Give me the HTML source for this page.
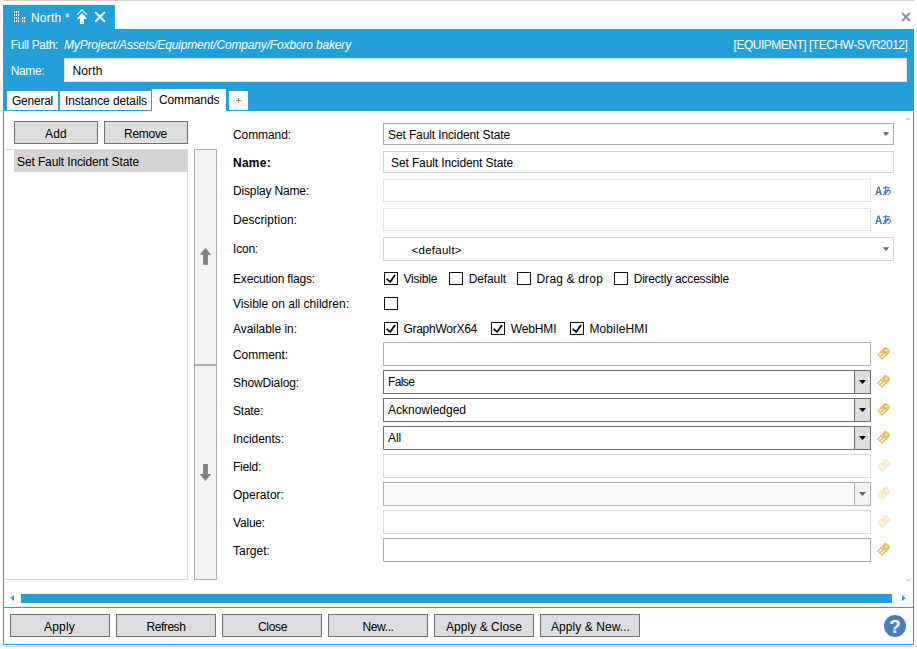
<!DOCTYPE html>
<html><head><meta charset="utf-8">
<style>
html,body{margin:0;padding:0;}
body{width:917px;height:649px;overflow:hidden;background:#fff;position:relative;font-family:"Liberation Sans",sans-serif;font-size:12px;color:#000;}
.a{position:absolute;box-sizing:border-box;}
.t{position:absolute;white-space:nowrap;line-height:14px;}
</style></head><body>
<div class="a" style="left:3px;top:0px;width:911px;height:1px;background:#d3d0d0"></div>
<div class="a" style="left:3px;top:5px;width:112px;height:25px;background:#259fd9"></div>
<div class="a" style="left:3px;top:29px;width:911px;height:82px;background:#259fd9"></div>
<div class="a" style="left:3px;top:110px;width:911px;height:535px;border:1px solid #259fd9;border-top:none"></div>
<div class="a" style="left:3px;top:645.6px;width:914px;height:1.4px;background:#d3d0cf"></div>
<svg class="a" style="left:13px;top:10px" width="14" height="14" viewBox="0 0 14 14">
<rect x="0.2" y="0.1" width="6.7" height="13.5" fill="#4f7dbd"/><g fill="#fff"><rect x="1" y="0.95" width="1.1" height="2.1"/><rect x="3" y="0.95" width="1.1" height="2.1"/><rect x="5" y="0.95" width="1.1" height="2.1"/><rect x="1" y="4" width="1.1" height="2.1"/><rect x="3" y="4" width="1.1" height="2.1"/><rect x="5" y="4" width="1.1" height="2.1"/><rect x="1" y="7.05" width="1.1" height="2.1"/><rect x="3" y="7.05" width="1.1" height="2.1"/><rect x="5" y="7.05" width="1.1" height="2.1"/><rect x="1" y="10.1" width="1.1" height="2.1"/><rect x="3" y="10.1" width="1.1" height="2.1"/><rect x="5" y="10.1" width="1.1" height="2.1"/></g>
<rect x="8.2" y="6.2" width="4.7" height="7.4" fill="#8a7f78"/><g fill="#fff"><rect x="9.1" y="7.05" width="1.1" height="2.1"/><rect x="11.1" y="7.05" width="1.1" height="2.1"/><rect x="9.1" y="10.1" width="1.1" height="2.1"/><rect x="11.1" y="10.1" width="1.1" height="2.1"/></g>
</svg>
<svg class="a" style="left:76px;top:9px" width="13" height="16" viewBox="0 0 13 16">
<path d="M1.1 5.7 L6 0.9 L10.9 5.7" fill="none" stroke="#fff" stroke-width="1.1"/>
<path d="M6 3.8 L11.1 10 L8 10 L8 15 L3.9 15 L3.9 10 L0.9 10 Z" fill="#fff"/></svg>
<svg class="a" style="left:94px;top:11px" width="12" height="12" viewBox="0 0 12 12"><path d="M1.7 1.6 L10.4 10.2 M10.4 1.6 L1.7 10.2" stroke="#fff" stroke-width="1.9" stroke-linecap="round" fill="none"/></svg>
<svg class="a" style="left:901px;top:12px" width="10" height="10" viewBox="0 0 10 10"><path d="M1 1 L9 9 M9 1 L1 9" stroke="#929292" stroke-width="2" fill="none"/></svg>
<div class="a" style="left:64px;top:58px;width:843px;height:24px;background:#fff;border:1px solid #e3e3e3"></div>
<div class="a" style="left:7px;top:91px;width:51px;height:19px;background:#fff"></div>
<div class="a" style="left:60px;top:91px;width:91px;height:19px;background:#fff"></div>
<div class="a" style="left:152px;top:89px;width:74px;height:22px;background:#fff"></div>
<div class="a" style="left:229px;top:91px;width:19px;height:19px;background:#fff"></div>
<div class="a" style="left:236px;top:100px;width:5px;height:1px;background:#6b9c84"></div>
<div class="a" style="left:238px;top:98px;width:1px;height:5px;background:#6b9c84"></div>
<div class="a" style="left:14px;top:121px;width:84px;height:23px;border:1px solid #707070;background:#dddddd"></div>
<div class="a" style="left:104px;top:121px;width:84px;height:23px;border:1px solid #707070;background:#dddddd"></div>
<div class="a" style="left:4px;top:149px;width:184px;height:431px;border:1px solid #dcdadb;border-left:none"></div>
<div class="a" style="left:14px;top:150px;width:173px;height:22px;background:#d5d3d4"></div>
<div class="a" style="left:194px;top:149px;width:23px;height:216px;background:#f4f4f4;border:1px solid #a9aeb1"></div>
<div class="a" style="left:194px;top:365px;width:23px;height:215px;background:#f4f4f4;border:1px solid #a9aeb1"></div>
<svg class="a" style="left:199px;top:247px" width="13" height="19" viewBox="0 0 13 19"><path d="M6.4 0.8 L12.2 7.7 L8.9 7.7 L8.9 17.8 L4.1 17.8 L4.1 7.7 L0.7 7.7 Z" fill="#808080"/></svg>
<svg class="a" style="left:199px;top:463px" width="13" height="19" viewBox="0 0 13 19"><path d="M6.4 17.9 L12.2 11 L8.9 11 L8.9 1.1 L4.1 1.1 L4.1 11 L0.7 11 Z" fill="#808080"/></svg>
<div class="a" style="left:383px;top:123px;width:511px;height:22px;background:#fff;border:1px solid #acacac"></div>
<svg class="a" style="left:882px;top:132px" width="9" height="5" viewBox="0 0 9 5"><path d="M0.80 0.20 L7.20 0.20 L4.00 3.90 Z" fill="#666"/></svg>
<div class="a" style="left:383px;top:151px;width:511px;height:22px;background:#fff;border:1px solid #d6d6d6"></div>
<div class="a" style="left:383px;top:179px;width:488px;height:23px;background:#fff;border:1px solid #e3e4ea"></div>
<div class="a" style="left:383px;top:208px;width:488px;height:23px;background:#fff;border:1px solid #e3e4ea"></div>
<svg class="a" style="left:875px;top:186px" width="17" height="10" viewBox="0 0 17 10"><path fill-rule="evenodd" fill="#4a7ebb" d="M0.1 8.9 L2.8 0.4 L4.4 0.4 L7.1 8.9 L5.4 8.9 L4.85 6.9 L2.35 6.9 L1.8 8.9 Z M2.7 5.6 L4.5 5.6 L3.6 2.2 Z"/><g fill="none" stroke="#4a7ebb" stroke-width="1.15" stroke-linecap="round"><path d="M8.4 1.9 L14.4 1.5"/><path d="M10.9 0.3 C10.6 3 10.3 6 10.7 8.5"/><path d="M13.4 3 C12.6 5.5 10.6 8 8.3 8.6"/><path d="M9.1 6.4 C10 4.6 13 3.8 14.8 4.8 C16.3 5.8 15.6 8 12.9 8.8"/></g></svg>
<svg class="a" style="left:875px;top:215px" width="17" height="10" viewBox="0 0 17 10"><path fill-rule="evenodd" fill="#4a7ebb" d="M0.1 8.9 L2.8 0.4 L4.4 0.4 L7.1 8.9 L5.4 8.9 L4.85 6.9 L2.35 6.9 L1.8 8.9 Z M2.7 5.6 L4.5 5.6 L3.6 2.2 Z"/><g fill="none" stroke="#4a7ebb" stroke-width="1.15" stroke-linecap="round"><path d="M8.4 1.9 L14.4 1.5"/><path d="M10.9 0.3 C10.6 3 10.3 6 10.7 8.5"/><path d="M13.4 3 C12.6 5.5 10.6 8 8.3 8.6"/><path d="M9.1 6.4 C10 4.6 13 3.8 14.8 4.8 C16.3 5.8 15.6 8 12.9 8.8"/></g></svg>
<div class="a" style="left:383px;top:237px;width:511px;height:24px;background:#fff;border:1px solid #d6d6d6"></div>
<svg class="a" style="left:882px;top:247px" width="9" height="6" viewBox="0 0 9 6"><path d="M0.80 0.30 L7.20 0.30 L4.00 4.00 Z" fill="#666"/></svg>
<div class="a" style="left:384px;top:272px;width:14px;height:13px;border:1px solid #111;background:#fff"></div>
<svg class="a" style="left:384px;top:272px" width="14" height="13" viewBox="0 0 14 13"><path d="M2.6 6.9 L6.2 10 L11 2.9" fill="none" stroke="#000" stroke-width="1.8"/></svg>
<div class="a" style="left:449px;top:272px;width:14px;height:13px;border:1px solid #111;background:#fff"></div>
<div class="a" style="left:517px;top:272px;width:14px;height:13px;border:1px solid #111;background:#fff"></div>
<div class="a" style="left:614px;top:272px;width:14px;height:13px;border:1px solid #111;background:#fff"></div>
<div class="a" style="left:384px;top:297px;width:14px;height:13px;border:1px solid #111;background:#fff"></div>
<div class="a" style="left:384px;top:322px;width:14px;height:13px;border:1px solid #111;background:#fff"></div>
<svg class="a" style="left:384px;top:322px" width="14" height="13" viewBox="0 0 14 13"><path d="M2.6 6.9 L6.2 10 L11 2.9" fill="none" stroke="#000" stroke-width="1.8"/></svg>
<div class="a" style="left:491px;top:322px;width:14px;height:13px;border:1px solid #111;background:#fff"></div>
<svg class="a" style="left:491px;top:322px" width="14" height="13" viewBox="0 0 14 13"><path d="M2.6 6.9 L6.2 10 L11 2.9" fill="none" stroke="#000" stroke-width="1.8"/></svg>
<div class="a" style="left:570px;top:322px;width:14px;height:13px;border:1px solid #111;background:#fff"></div>
<svg class="a" style="left:570px;top:322px" width="14" height="13" viewBox="0 0 14 13"><path d="M2.6 6.9 L6.2 10 L11 2.9" fill="none" stroke="#000" stroke-width="1.8"/></svg>
<div class="a" style="left:383px;top:342px;width:488px;height:24px;background:#fff;border:1px solid #b4adab"></div>
<svg class="a" style="left:876px;top:346px;opacity:1.0" width="16" height="16" viewBox="0 0 16 16"><path d="M8.25 1.15 L10.6 1.05 L13.95 4.4 L13.95 6.6 L5.95 14 L1 9.05 Z" fill="#eabf63"/><path d="M10.4 3 L10.9 4.05 L11.95 4.55 L10.9 5.05 L10.4 6.1 L9.9 5.05 L8.85 4.55 L9.9 4.05 Z" fill="#fff"/><path d="M3.2 9.75 L5.95 7.2 M5.05 11.65 L9 8.1" stroke="#fff" stroke-width="1.15" fill="none"/></svg>
<div class="a" style="left:383px;top:370px;width:488px;height:24px;background:#fff;border:1px solid #6e6e6e"></div>
<div class="a" style="left:854px;top:370px;width:17px;height:24px;background:#dddddd;border:1px solid #6e6e6e"></div>
<svg class="a" style="left:859px;top:380px" width="8" height="5" viewBox="0 0 8 5"><path d="M0.00 0.00 L7.00 0.00 L3.50 4.00 Z" fill="#000"/></svg>
<svg class="a" style="left:876px;top:374px;opacity:1.0" width="16" height="16" viewBox="0 0 16 16"><path d="M8.25 1.15 L10.6 1.05 L13.95 4.4 L13.95 6.6 L5.95 14 L1 9.05 Z" fill="#eabf63"/><path d="M10.4 3 L10.9 4.05 L11.95 4.55 L10.9 5.05 L10.4 6.1 L9.9 5.05 L8.85 4.55 L9.9 4.05 Z" fill="#fff"/><path d="M3.2 9.75 L5.95 7.2 M5.05 11.65 L9 8.1" stroke="#fff" stroke-width="1.15" fill="none"/></svg>
<div class="a" style="left:383px;top:398px;width:488px;height:24px;background:#fff;border:1px solid #6e6e6e"></div>
<div class="a" style="left:854px;top:398px;width:17px;height:24px;background:#dddddd;border:1px solid #6e6e6e"></div>
<svg class="a" style="left:859px;top:408px" width="8" height="5" viewBox="0 0 8 5"><path d="M0.00 0.00 L7.00 0.00 L3.50 4.00 Z" fill="#000"/></svg>
<svg class="a" style="left:876px;top:402px;opacity:1.0" width="16" height="16" viewBox="0 0 16 16"><path d="M8.25 1.15 L10.6 1.05 L13.95 4.4 L13.95 6.6 L5.95 14 L1 9.05 Z" fill="#eabf63"/><path d="M10.4 3 L10.9 4.05 L11.95 4.55 L10.9 5.05 L10.4 6.1 L9.9 5.05 L8.85 4.55 L9.9 4.05 Z" fill="#fff"/><path d="M3.2 9.75 L5.95 7.2 M5.05 11.65 L9 8.1" stroke="#fff" stroke-width="1.15" fill="none"/></svg>
<div class="a" style="left:383px;top:426px;width:488px;height:24px;background:#fff;border:1px solid #6e6e6e"></div>
<div class="a" style="left:854px;top:426px;width:17px;height:24px;background:#dddddd;border:1px solid #6e6e6e"></div>
<svg class="a" style="left:859px;top:436px" width="8" height="5" viewBox="0 0 8 5"><path d="M0.00 0.00 L7.00 0.00 L3.50 4.00 Z" fill="#000"/></svg>
<svg class="a" style="left:876px;top:430px;opacity:1.0" width="16" height="16" viewBox="0 0 16 16"><path d="M8.25 1.15 L10.6 1.05 L13.95 4.4 L13.95 6.6 L5.95 14 L1 9.05 Z" fill="#eabf63"/><path d="M10.4 3 L10.9 4.05 L11.95 4.55 L10.9 5.05 L10.4 6.1 L9.9 5.05 L8.85 4.55 L9.9 4.05 Z" fill="#fff"/><path d="M3.2 9.75 L5.95 7.2 M5.05 11.65 L9 8.1" stroke="#fff" stroke-width="1.15" fill="none"/></svg>
<div class="a" style="left:383px;top:454px;width:488px;height:24px;background:#fff;border:1px solid #dadada"></div>
<svg class="a" style="left:876px;top:458px;opacity:0.35" width="16" height="16" viewBox="0 0 16 16"><path d="M8.25 1.15 L10.6 1.05 L13.95 4.4 L13.95 6.6 L5.95 14 L1 9.05 Z" fill="#eabf63"/><path d="M10.4 3 L10.9 4.05 L11.95 4.55 L10.9 5.05 L10.4 6.1 L9.9 5.05 L8.85 4.55 L9.9 4.05 Z" fill="#fff"/><path d="M3.2 9.75 L5.95 7.2 M5.05 11.65 L9 8.1" stroke="#fff" stroke-width="1.15" fill="none"/></svg>
<div class="a" style="left:383px;top:482px;width:488px;height:24px;background:#fafafa;border:1px solid #adb2b5"></div>
<div class="a" style="left:854px;top:483px;width:16px;height:22px;background:#f3f3f3;border-left:1px solid #adb2b5"></div>
<svg class="a" style="left:859px;top:492px" width="8" height="5" viewBox="0 0 8 5"><path d="M0.00 0.00 L7.00 0.00 L3.50 4.00 Z" fill="#666"/></svg>
<svg class="a" style="left:876px;top:486px;opacity:0.35" width="16" height="16" viewBox="0 0 16 16"><path d="M8.25 1.15 L10.6 1.05 L13.95 4.4 L13.95 6.6 L5.95 14 L1 9.05 Z" fill="#eabf63"/><path d="M10.4 3 L10.9 4.05 L11.95 4.55 L10.9 5.05 L10.4 6.1 L9.9 5.05 L8.85 4.55 L9.9 4.05 Z" fill="#fff"/><path d="M3.2 9.75 L5.95 7.2 M5.05 11.65 L9 8.1" stroke="#fff" stroke-width="1.15" fill="none"/></svg>
<div class="a" style="left:383px;top:510px;width:488px;height:24px;background:#fff;border:1px solid #dadada"></div>
<svg class="a" style="left:876px;top:514px;opacity:0.35" width="16" height="16" viewBox="0 0 16 16"><path d="M8.25 1.15 L10.6 1.05 L13.95 4.4 L13.95 6.6 L5.95 14 L1 9.05 Z" fill="#eabf63"/><path d="M10.4 3 L10.9 4.05 L11.95 4.55 L10.9 5.05 L10.4 6.1 L9.9 5.05 L8.85 4.55 L9.9 4.05 Z" fill="#fff"/><path d="M3.2 9.75 L5.95 7.2 M5.05 11.65 L9 8.1" stroke="#fff" stroke-width="1.15" fill="none"/></svg>
<div class="a" style="left:383px;top:538px;width:488px;height:24px;background:#fff;border:1px solid #b0aaa8"></div>
<svg class="a" style="left:876px;top:542px;opacity:1.0" width="16" height="16" viewBox="0 0 16 16"><path d="M8.25 1.15 L10.6 1.05 L13.95 4.4 L13.95 6.6 L5.95 14 L1 9.05 Z" fill="#eabf63"/><path d="M10.4 3 L10.9 4.05 L11.95 4.55 L10.9 5.05 L10.4 6.1 L9.9 5.05 L8.85 4.55 L9.9 4.05 Z" fill="#fff"/><path d="M3.2 9.75 L5.95 7.2 M5.05 11.65 L9 8.1" stroke="#fff" stroke-width="1.15" fill="none"/></svg>
<svg class="a" style="left:10px;top:594px" width="5" height="8" viewBox="0 0 5 8"><path d="M4 1 L0.2 4 L4 7 Z" fill="#259fd9"/></svg>
<div class="a" style="left:21px;top:594px;width:871px;height:9px;background:#259fd9"></div>
<svg class="a" style="left:902px;top:594px" width="5" height="8" viewBox="0 0 5 8"><path d="M0 1 L3.9 4 L0 7 Z" fill="#259fd9"/></svg>
<div class="a" style="left:4px;top:607px;width:909px;height:1px;background:#259fd9"></div>
<svg class="a" style="left:905px;top:117px" width="6.5" height="3.2" viewBox="0 0 7 4" preserveAspectRatio="none"><path d="M0 4 L3.5 0 L7 4 Z" fill="#d6d6d6"/></svg>
<svg class="a" style="left:905px;top:579px" width="6.5" height="3.2" viewBox="0 0 7 4" preserveAspectRatio="none"><path d="M0 0 L3.5 4 L7 0 Z" fill="#d6d6d6"/></svg>
<div class="a" style="left:10px;top:614px;width:100px;height:23px;border:1px solid #707070;background:#dddddd"></div>
<div class="a" style="left:116px;top:614px;width:100px;height:23px;border:1px solid #707070;background:#dddddd"></div>
<div class="a" style="left:222px;top:614px;width:100px;height:23px;border:1px solid #707070;background:#dddddd"></div>
<div class="a" style="left:328px;top:614px;width:100px;height:23px;border:1px solid #707070;background:#dddddd"></div>
<div class="a" style="left:434px;top:614px;width:100px;height:23px;border:1px solid #707070;background:#dddddd"></div>
<div class="a" style="left:540px;top:614px;width:100px;height:23px;border:1px solid #707070;background:#dddddd"></div>
<div class="a" style="left:884px;top:615px;width:22px;height:22px;border-radius:11px;background:#4a7ebb;color:#fff;font-weight:bold;font-size:19px;line-height:23px;text-align:center">?</div>
<div class="t" style="left:30.9px;top:11px;font-size:12px;letter-spacing:0.249px;color:#fff">North *</div>
<div class="t" style="left:10.7px;top:38px;font-size:12px;letter-spacing:-0.340px;color:#fff">Full Path:</div>
<div class="t" style="left:64px;top:38px;font-size:12px;letter-spacing:-0.159px;color:#fff;font-style:italic">MyProject/Assets/Equipment/Company/Foxboro bakery</div>
<div class="t" style="left:733.6px;top:38px;font-size:12px;letter-spacing:-0.495px;color:#fff">[EQUIPMENT] [TECHW-SVR2012]</div>
<div class="t" style="left:10.7px;top:64px;font-size:12px;letter-spacing:-0.369px;color:#fff">Name:</div>
<div class="t" style="left:72.4px;top:64px;font-size:12px;letter-spacing:0.191px;">North</div>
<div class="t" style="left:12px;top:94px;font-size:12px;letter-spacing:-0.243px;">General</div>
<div class="t" style="left:65px;top:94px;font-size:12px;letter-spacing:-0.087px;">Instance details</div>
<div class="t" style="left:159px;top:93px;font-size:12px;letter-spacing:-0.132px;">Commands</div>
<div class="t" style="left:45px;top:127px;font-size:12px;letter-spacing:0.214px;">Add</div>
<div class="t" style="left:124px;top:127px;font-size:12px;letter-spacing:-0.281px;">Remove</div>
<div class="t" style="left:17px;top:155px;font-size:12px;letter-spacing:-0.115px;">Set Fault Incident State</div>
<div class="t" style="left:233px;top:127.5px;font-size:12px;letter-spacing:-0.086px;">Command:</div>
<div class="t" style="left:233px;top:155.5px;font-size:12px;letter-spacing:0.263px;font-weight:bold">Name:</div>
<div class="t" style="left:233px;top:183.5px;font-size:12px;letter-spacing:-0.156px;">Display Name:</div>
<div class="t" style="left:233px;top:212.5px;font-size:12px;letter-spacing:0.053px;">Description:</div>
<div class="t" style="left:233px;top:241.5px;font-size:12px;letter-spacing:-0.203px;">Icon:</div>
<div class="t" style="left:233px;top:271.5px;font-size:12px;letter-spacing:-0.170px;">Execution flags:</div>
<div class="t" style="left:233px;top:296.5px;font-size:12px;letter-spacing:0.006px;">Visible on all children:</div>
<div class="t" style="left:233px;top:321.5px;font-size:12px;letter-spacing:-0.038px;">Available in:</div>
<div class="t" style="left:233px;top:347.5px;font-size:12px;letter-spacing:-0.045px;">Comment:</div>
<div class="t" style="left:233px;top:375.5px;font-size:12px;letter-spacing:-0.125px;">ShowDialog:</div>
<div class="t" style="left:233px;top:403.5px;font-size:12px;letter-spacing:-0.227px;">State:</div>
<div class="t" style="left:233px;top:431.5px;font-size:12px;letter-spacing:-0.037px;">Incidents:</div>
<div class="t" style="left:233px;top:459.5px;font-size:12px;letter-spacing:-0.224px;">Field:</div>
<div class="t" style="left:233px;top:487.5px;font-size:12px;letter-spacing:0.033px;">Operator:</div>
<div class="t" style="left:233px;top:515.5px;font-size:12px;letter-spacing:-0.190px;">Value:</div>
<div class="t" style="left:233px;top:543.5px;font-size:12px;letter-spacing:0.045px;">Target:</div>
<div class="t" style="left:388px;top:128px;font-size:12px;letter-spacing:-0.115px;">Set Fault Incident State</div>
<div class="t" style="left:391px;top:156px;font-size:12px;letter-spacing:-0.115px;">Set Fault Incident State</div>
<div class="t" style="left:411.6px;top:243px;font-size:11.5px;letter-spacing:0.248px;">&lt;default&gt;</div>
<div class="t" style="left:403.4px;top:272px;font-size:12px;letter-spacing:-0.192px;">Visible</div>
<div class="t" style="left:468.8px;top:272px;font-size:12px;letter-spacing:-0.133px;">Default</div>
<div class="t" style="left:536.4px;top:272px;font-size:12px;letter-spacing:0.172px;">Drag &amp; drop</div>
<div class="t" style="left:633.7px;top:272px;font-size:12px;letter-spacing:-0.214px;">Directly accessible</div>
<div class="t" style="left:403.4px;top:322px;font-size:12px;letter-spacing:-0.262px;">GraphWorX64</div>
<div class="t" style="left:510.7px;top:322px;font-size:12px;letter-spacing:-0.109px;">WebHMI</div>
<div class="t" style="left:589.4px;top:322px;font-size:12px;letter-spacing:0.127px;">MobileHMI</div>
<div class="t" style="left:388px;top:375px;font-size:12px;letter-spacing:-0.600px;">False</div>
<div class="t" style="left:388px;top:403px;font-size:12px;letter-spacing:-0.005px;">Acknowledged</div>
<div class="t" style="left:388px;top:431px;font-size:12px;letter-spacing:-0.115px;">All</div>
<div class="t" style="left:44px;top:620px;font-size:12px;letter-spacing:0.194px;">Apply</div>
<div class="t" style="left:146.5px;top:620px;font-size:12px;letter-spacing:-0.447px;">Refresh</div>
<div class="t" style="left:258px;top:620px;font-size:12px;letter-spacing:-0.298px;">Close</div>
<div class="t" style="left:362.6px;top:620px;font-size:12px;letter-spacing:-0.410px;">New...</div>
<div class="t" style="left:446px;top:620px;font-size:12px;letter-spacing:0.048px;">Apply &amp; Close</div>
<div class="t" style="left:551px;top:620px;font-size:12px;letter-spacing:0.068px;">Apply &amp; New...</div>
</body></html>
